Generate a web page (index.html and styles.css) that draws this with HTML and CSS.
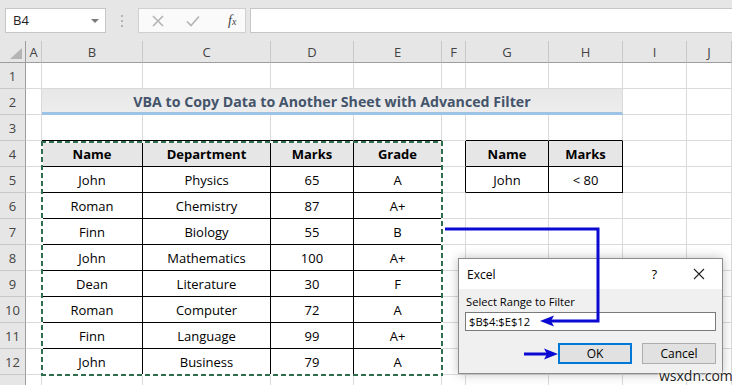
FILE: index.html
```html
<!DOCTYPE html>
<html lang="en">
<head>
  <meta charset="UTF-8">
  <title>VBA to Copy Data to Another Sheet with Advanced Filter</title>
  <link rel="stylesheet" href="styles.css">
</head>
<body>

<div class="app">

  <div class="formula-bar">
    <div class="name-box">B4<span class="drop"></span></div>
    <div class="grip">
      <svg width="4" height="14" viewBox="0 0 4 14"><rect x="1" y="1" width="2" height="2"/><rect x="1" y="6" width="2" height="2"/><rect x="1" y="11" width="2" height="2"/></svg>
    </div>
    <div class="fx-box">
      <svg class="ico" width="12" height="12" viewBox="0 0 12 12"><path d="M1 1 L11 11 M11 1 L1 11"/></svg>
      <svg class="ico" width="14" height="12" viewBox="0 0 14 12"><path d="M1 6.5 L5 10.5 L13 1.5"/></svg>
      <span class="fx">f<span>x</span></span>
    </div>
    <div class="formula-input"></div>
  </div>

  <table class="sheet">
    <colgroup>
      <col style="width:26px"><col style="width:16px"><col style="width:101px"><col style="width:128px">
      <col style="width:83px"><col style="width:88px"><col style="width:24px"><col style="width:83px">
      <col style="width:74px"><col style="width:64px"><col style="width:45px">
    </colgroup>
    <thead>
      <tr>
        <th class="corner"><span class="tri"></span></th>
        <th>A</th><th>B</th><th>C</th><th>D</th><th>E</th><th>F</th><th>G</th><th>H</th><th>I</th><th>J</th>
      </tr>
    </thead>
    <tbody>
      <tr><th>1</th><td></td><td></td><td></td><td></td><td></td><td></td><td></td><td></td><td></td><td></td></tr>
      <tr><th>2</th><td></td><td class="title" colspan="7">VBA to Copy Data to Another Sheet with Advanced Filter</td><td></td><td></td></tr>
      <tr><th>3</th><td></td><td class="bt"></td><td class="bt"></td><td class="bt"></td><td class="bt"></td><td></td><td class="bt"></td><td class="bt"></td><td></td><td></td></tr>
      <tr><th>4</th><td class="bl"></td><td class="d h">Name</td><td class="d h">Department</td><td class="d h">Marks</td><td class="d h">Grade</td><td class="bl"></td><td class="d h">Name</td><td class="d h">Marks</td><td></td><td></td></tr>
      <tr><th>5</th><td class="bl"></td><td class="d">John</td><td class="d">Physics</td><td class="d">65</td><td class="d">A</td><td class="bl"></td><td class="d">John</td><td class="d">&lt; 80</td><td></td><td></td></tr>
      <tr><th>6</th><td class="bl"></td><td class="d">Roman</td><td class="d">Chemistry</td><td class="d">87</td><td class="d">A+</td><td></td><td></td><td></td><td></td><td></td></tr>
      <tr><th>7</th><td class="bl"></td><td class="d">Finn</td><td class="d">Biology</td><td class="d">55</td><td class="d">B</td><td></td><td></td><td></td><td></td><td></td></tr>
      <tr><th>8</th><td class="bl"></td><td class="d">John</td><td class="d">Mathematics</td><td class="d">100</td><td class="d">A+</td><td></td><td></td><td></td><td></td><td></td></tr>
      <tr><th>9</th><td class="bl"></td><td class="d">Dean</td><td class="d">Literature</td><td class="d">30</td><td class="d">F</td><td></td><td></td><td></td><td></td><td></td></tr>
      <tr><th>10</th><td class="bl"></td><td class="d">Roman</td><td class="d">Computer</td><td class="d">72</td><td class="d">A</td><td></td><td></td><td></td><td></td><td></td></tr>
      <tr><th>11</th><td class="bl"></td><td class="d">Finn</td><td class="d">Language</td><td class="d">99</td><td class="d">A+</td><td></td><td></td><td></td><td></td><td></td></tr>
      <tr><th>12</th><td class="bl"></td><td class="d">John</td><td class="d">Business</td><td class="d">79</td><td class="d">A</td><td></td><td></td><td></td><td></td><td></td></tr>
      <tr><th></th><td></td><td></td><td></td><td></td><td></td><td></td><td></td><td></td><td></td><td></td></tr>
    </tbody>
  </table>

  <!-- copy marquee around B4:E12 -->
  <div class="marquee"></div>

  <div class="dialog">
    <div class="dlg-title">
      <span class="dlg-name">Excel</span>
      <span class="dlg-help">?</span>
      <svg class="dlg-close" width="12" height="12" viewBox="0 0 12 12"><path d="M1 1 L11 11 M11 1 L1 11"/></svg>
    </div>
    <div class="dlg-body">
      <div class="dlg-label">Select Range to Filter</div>
      <div class="dlg-input">$B$4:$E$12</div>
      <div class="dlg-buttons">
        <button class="btn ok">OK</button>
        <button class="btn">Cancel</button>
      </div>
    </div>
  </div>

  <svg class="arrows" width="732" height="385" viewBox="0 0 732 385">
    <path class="line" d="M445 229 H598 V321 H550"/>
    <polygon points="540,321 554,315.5 551,321 554,326.5"/>
    <path class="line" d="M524 354 H549"/>
    <polygon points="558,354 544,348.5 547,354 544,359.5"/>
  </svg>

  <div class="watermark">wsxdn.com</div>
</div>

</body>
</html>
```

FILE: styles.css
```css
body {
  margin: 0;
  background: #fff;
  font-family: 'Open Sans', 'Liberation Sans', sans-serif;
  overflow: hidden;
}

.app {
  position: relative;
  width: 732px;
  height: 385px;
  overflow: hidden;
}

/* ---------- formula bar ---------- */
.formula-bar {
  height: 41px;
  box-sizing: border-box;
  padding: 8px 0 0 5px;
  display: flex;
  align-items: flex-start;
  background: #e6e6e6;
}

.name-box {
  width: 101px;
  height: 25px;
  box-sizing: border-box;
  border: 1px solid #c6c6c6;
  background: #fff;
  font-size: 13px;
  line-height: 23px;
  padding-left: 7px;
  color: #222;
  position: relative;
}

.drop {
  position: absolute;
  right: 6px;
  top: 10px;
  border-left: 4px solid transparent;
  border-right: 4px solid transparent;
  border-top: 4px solid #7a7a7a;
}

.grip {
  width: 32px;
  display: flex;
  justify-content: center;
  padding-top: 6px;
}
.grip svg { fill: #b3b3b3; }

.fx-box {
  width: 108px;
  height: 25px;
  box-sizing: border-box;
  border: 1px solid #d0d0d0;
  background: #fafafa;
  display: flex;
  align-items: center;
  padding-left: 13px;
  gap: 22px;
}

.ico path {
  fill: none;
  stroke: #b4b4b4;
  stroke-width: 1.6;
}

.fx {
  font-family: 'Liberation Serif', serif;
  font-style: italic;
  font-size: 14px;
  color: #444;
  margin-left: 6px;
}
.fx span { font-size: 10px; }

.formula-input {
  flex: 1;
  height: 25px;
  box-sizing: border-box;
  margin-left: 4px;
  border: 1px solid #c6c6c6;
  border-right: none;
  background: #fff;
}

/* ---------- sheet ---------- */
.sheet {
  border-collapse: separate;
  border-spacing: 0;
  table-layout: fixed;
  width: 732px;
  font-size: 13px;
  color: #000;
}

.sheet th {
  font-weight: normal;
  color: #444;
  background: #e6e6e6;
  padding: 0;
}

.sheet thead th {
  height: 22px;
  box-sizing: border-box;
  border-right: 1px solid #c8c8c8;
  border-bottom: 1px solid #9d9d9d;
  font-size: 13px;
}

.sheet thead th.corner {
  position: relative;
  border-right: 1px solid #9d9d9d;
}

.tri {
  position: absolute;
  right: 3px;
  bottom: 3px;
  border-left: 12px solid transparent;
  border-bottom: 11px solid #b4b4b4;
}

.sheet tbody th {
  height: 26px;
  box-sizing: border-box;
  border-right: 1px solid #9d9d9d;
  border-bottom: 1px solid #c8c8c8;
}

.sheet td {
  height: 26px;
  box-sizing: border-box;
  padding: 0;
  border-right: 1px solid #dadada;
  border-bottom: 1px solid #dadada;
  text-align: center;
  white-space: nowrap;
}

.sheet td.d {
  border-right-color: #000;
  border-bottom-color: #000;
}
.sheet td.h {
  background: #e7e6e6;
  font-weight: bold;
}
.sheet td.bl { border-right-color: #000; }
.sheet td.bt { border-bottom-color: #000; }

.sheet td.title {
  background: linear-gradient(#e7e7e7, #ededed);
  border-bottom: 3px solid #9dc3e6;
  border-right-color: #dadada;
  color: #44546a;
  font-weight: bold;
  font-size: 14.2px;
  padding-top: 2px;
}

/* marching ants over the copied range */
.marquee {
  position: absolute;
  left: 41px;
  top: 141px;
  width: 402px;
  height: 235px;
  background:
    repeating-linear-gradient(90deg, #2e6e4f 0 5px, #fff 5px 8px) left top / 100% 2px no-repeat,
    repeating-linear-gradient(90deg, #2e6e4f 0 5px, #fff 5px 8px) left bottom / 100% 2px no-repeat,
    repeating-linear-gradient(180deg, #2e6e4f 0 5px, #fff 5px 8px) left top / 2px 100% no-repeat,
    repeating-linear-gradient(180deg, #2e6e4f 0 5px, #fff 5px 8px) right top / 2px 100% no-repeat;
}

/* ---------- dialog ---------- */
.dialog {
  position: absolute;
  left: 458px;
  top: 258px;
  width: 265px;
  height: 116px;
  box-sizing: border-box;
  border: 1px solid #8c8c8c;
  background: #f0f0f0;
  box-shadow: 0 0 10px rgba(0,0,0,0.25);
  font-size: 11.2px;
  color: #000;
}

.dlg-title {
  height: 30px;
  background: #fff;
  display: flex;
  align-items: center;
  padding-left: 8px;
}

.dlg-name { flex: 1; font-size: 12px; }

.dlg-help {
  font-size: 13px;
  margin-right: 36px;
}

.dlg-close {
  margin-right: 17px;
}
.dlg-close path {
  fill: none;
  stroke: #222;
  stroke-width: 1.1;
}

.dlg-body {
  padding: 5px 6px 0 6px;
}

.dlg-label {
  line-height: 16px;
  padding-left: 1px;
}

.dlg-input {
  margin-top: 2px;
  height: 19px;
  box-sizing: border-box;
  border: 1px solid #7a7a7a;
  background: #fff;
  line-height: 17px;
  padding-left: 3px;
}

.dlg-buttons {
  margin-top: 12px;
  display: flex;
  justify-content: flex-end;
  gap: 10px;
}

.btn {
  width: 74px;
  height: 21px;
  box-sizing: border-box;
  border: 1px solid #adadad;
  background: #e1e1e1;
  font-family: inherit;
  font-size: 12px;
  padding: 0;
  color: #000;
}

.btn.ok {
  border: 2px solid #0078d7;
}

/* ---------- annotation arrows ---------- */
.arrows {
  position: absolute;
  left: 0;
  top: 0;
  pointer-events: none;
}
.arrows .line {
  fill: none;
  stroke: #0a0ad2;
  stroke-width: 3;
}
.arrows polygon { fill: #0a0ad2; }

.watermark {
  position: absolute;
  left: 659px;
  top: 366px;
  font-size: 14px;
  color: #222;
  text-shadow: 0 0 2px #fff, 0 0 2px #fff, 0 0 3px #fff;
}
```
